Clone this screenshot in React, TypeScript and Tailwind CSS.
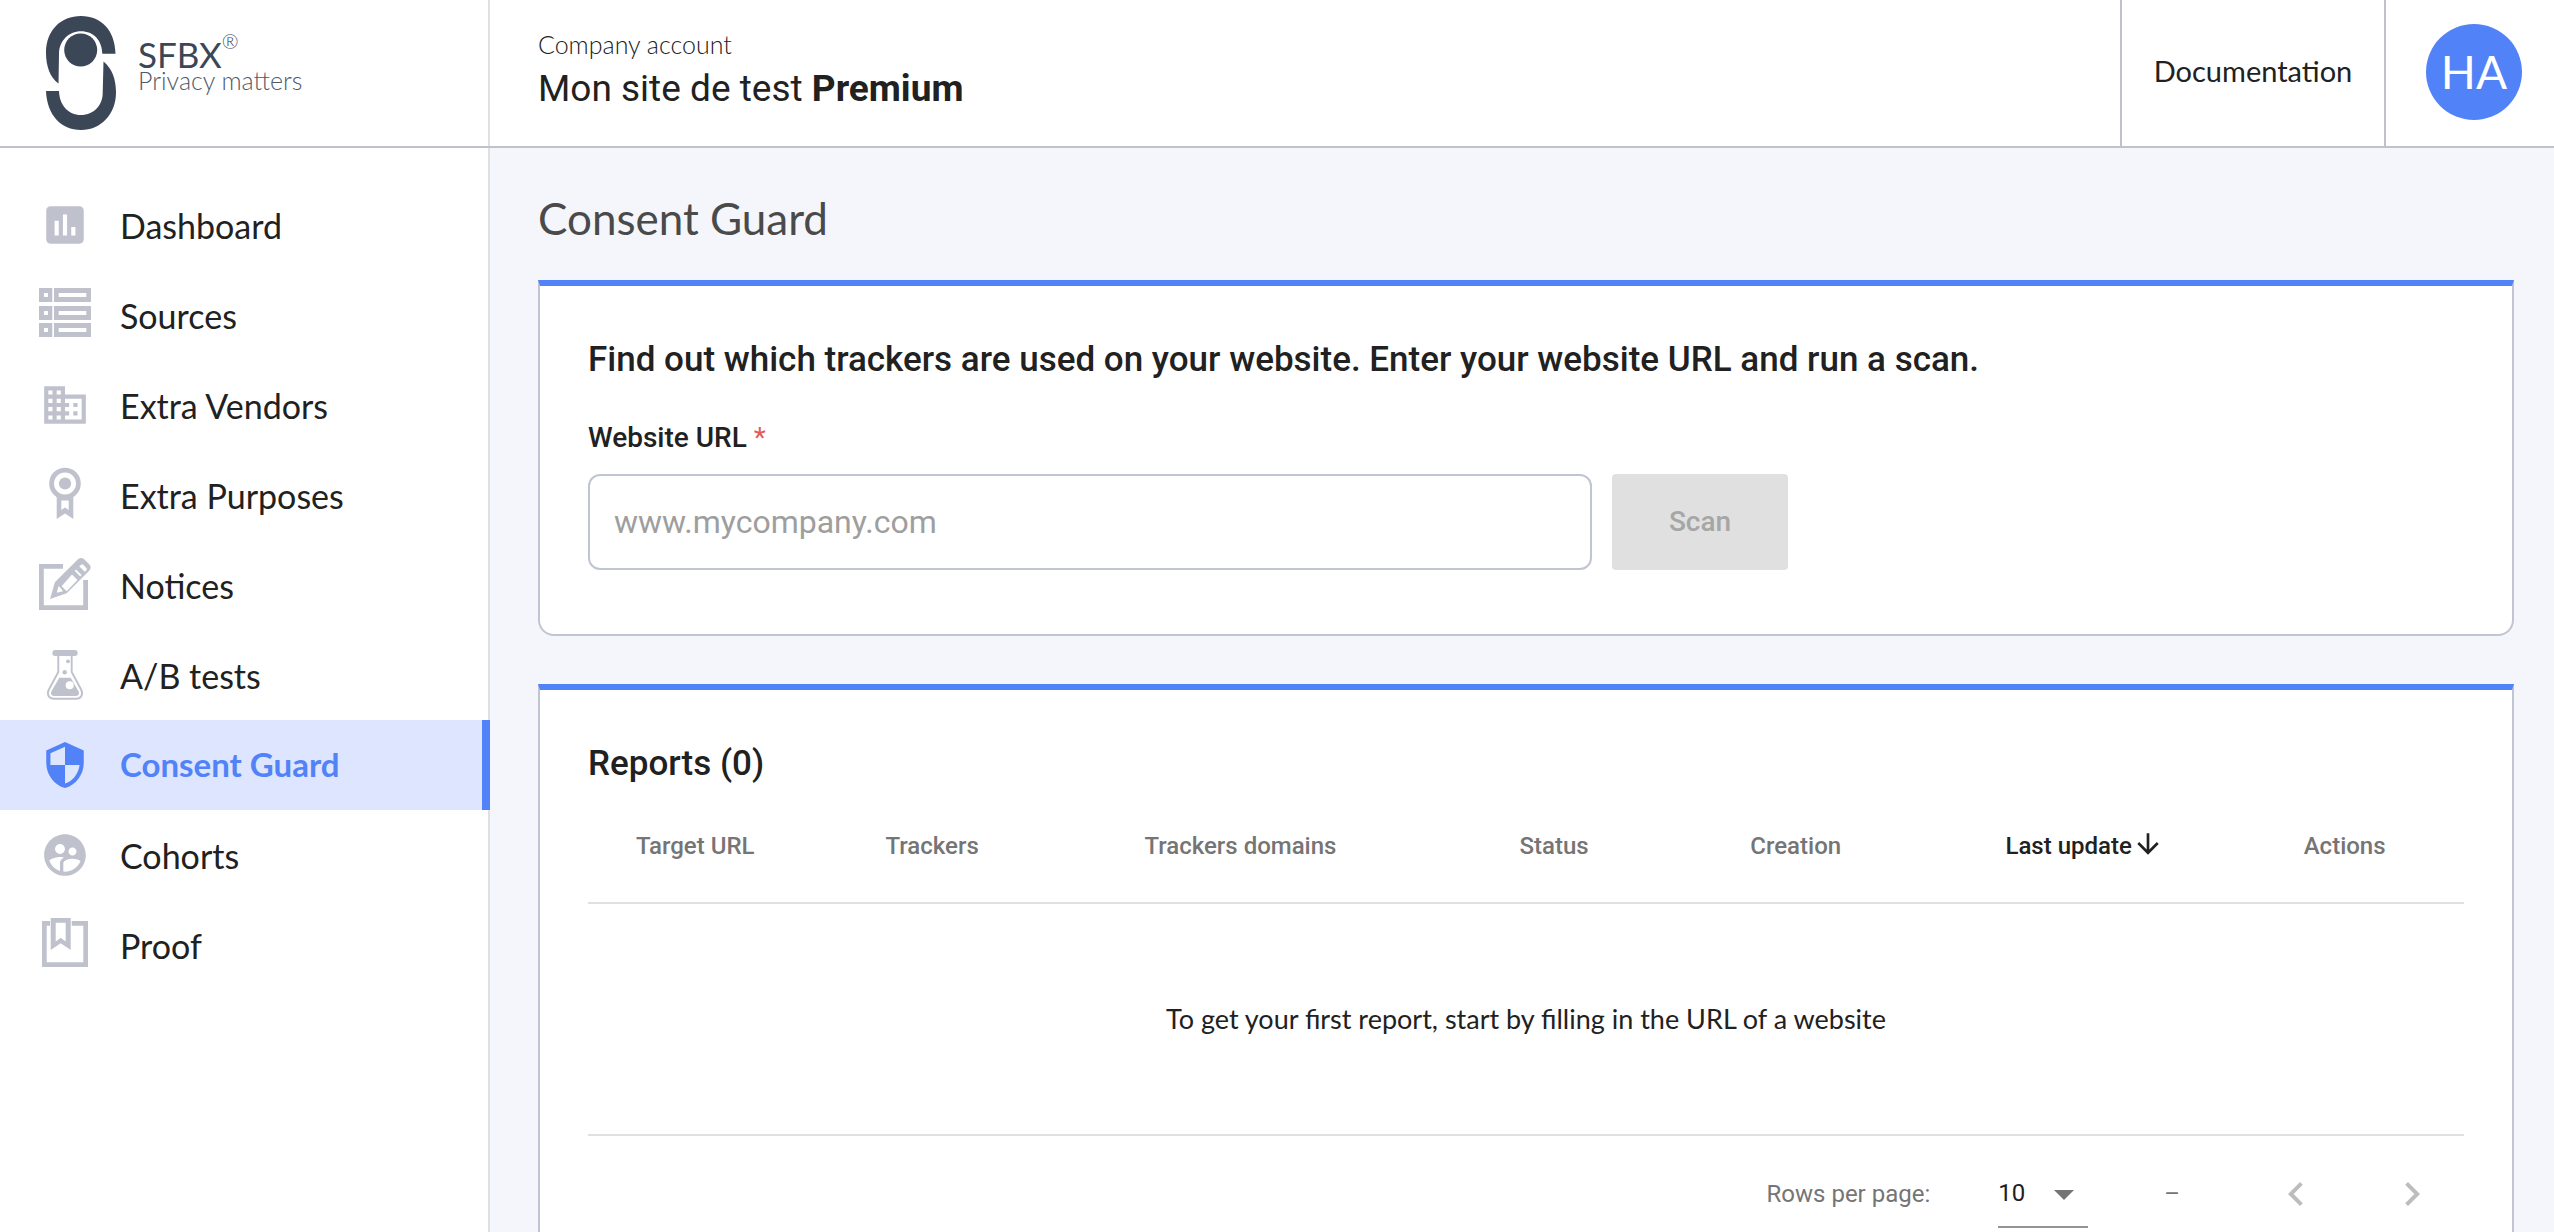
import type { ReactNode } from "react";
import {
  MdArrowDownward,
  MdArrowDropDown,
  MdAssessment,
  MdBusiness,
  MdChevronLeft,
  MdChevronRight,
  MdSecurity,
  MdSupervisedUserCircle,
} from "react-icons/md";

function Drawing({ children }: { children: ReactNode }) {
  return (
    <svg viewBox="0 0 60 60" className="size-[60px]" fill="currentColor" aria-hidden="true">
      {children}
    </svg>
  );
}

const sources = (
  <Drawing>
    {[3, 21, 38].map((y) => (
      <path
        key={y}
        fillRule="evenodd"
        d={`M4 ${y}h13.3v14H4zM9 ${y + 5}v4h4v-4zM19 ${y}h37v14H19zM23.7 ${y + 5}v4h27.6v-4z`}
      />
    ))}
  </Drawing>
);

const purposes = (
  <Drawing>
    <circle cx="30" cy="18.5" r="13.4" fill="none" stroke="currentColor" strokeWidth="4.8" />
    <circle cx="30" cy="18.5" r="6.1" />
    <path fillRule="evenodd" d="M21.7 31h16.6v23L30 48.5 21.7 54zM26.3 35.6V45l3.7-2.6 3.7 2.6v-9.4z" />
  </Drawing>
);

const notices = (
  <Drawing>
    <path d="M4 9h24v4.8H8.8v36.4h39.4V25H53v30H4z" />
    <path
      fillRule="evenodd"
      d="M15 44l5-17L43 4.3q3-2.8 6.2 0l5 5q3 3.2 0 6.5L31.7 38.3zM26.6 31.2l5 5L42.5 25 37 19.6zM23.6 31l-1.8 6.8 6.2-1.6-1.8-2.4zM39.6 15.8l5.6 5.6 1.4-1.4-5.6-5.6zM44.2 11.2l5.6 5.6 1.6-1.6q1-1 0-2.2l-3.2-3.2q-1-1-2 0z"
    />
  </Drawing>
);

const flask = (
  <Drawing>
    <rect x="17.3" y="5" width="25.4" height="6" rx="3" />
    <path
      fill="none"
      stroke="currentColor"
      strokeWidth="1.9"
      d="M23.3 10v17L13.9 44.5C11.3 49.5 14 53.7 19 53.7h22c5 0 7.7-4.2 5.1-9.2L36.7 27V10"
    />
    <path
      fillRule="evenodd"
      d="M24.3 32.7h11.4L43.4 46c1.6 2.8 0 5-3 5H19.6c-3 0-4.6-2.200-3-5zM34.7 36.3a4 4 0 1 0 0 8 4 4 0 0 0 0-8z"
    />
    <circle cx="29.7" cy="27.3" r="2.2" />
    <circle cx="33" cy="16.3" r="1.9" />
  </Drawing>
);

const proof = (
  <Drawing>
    <path d="M7 6h8v4.7h-3.3v36.6h36.6V10.7H36.7V6H53v46H7z" />
    <path fillRule="evenodd" d="M15.7 3h20v32l-10-6.7-10 6.7zM20.7 7.7v18.7l5-3.7 5 3.7V7.7z" />
  </Drawing>
);

const items: { label: string; icon: ReactNode; active?: boolean }[] = [
  { label: "Dashboard", icon: <MdAssessment className="size-[50px]" /> },
  { label: "Sources", icon: sources },
  { label: "Extra Vendors", icon: <MdBusiness className="size-[50px]" /> },
  { label: "Extra Purposes", icon: purposes },
  { label: "Notices", icon: notices },
  { label: "A/B tests", icon: flask },
  { label: "Consent Guard", icon: <MdSecurity className="size-[50px]" />, active: true },
  { label: "Cohorts", icon: <MdSupervisedUserCircle className="size-[50px]" /> },
  { label: "Proof", icon: proof },
];

const columns = [
  { label: "Target URL", width: "w-[13.3%]" },
  { label: "Trackers", width: "w-[13.8%]" },
  { label: "Trackers domains", width: "w-[20%]" },
  { label: "Status", width: "w-[12.3%]" },
  { label: "Creation", width: "w-[13.6%]" },
  { label: "Last update", width: "w-[15.9%]", sorted: true },
  { label: "Actions", width: "w-[11.1%]" },
];

function Logo() {
  return (
    <a href="#" className="flex h-full items-center gap-[22px] pl-[46px] text-[#3b4757]">
      <svg viewBox="0 0 70 114" className="h-[114px] w-[70px]" fill="currentColor" aria-hidden="true">
        <path d="M12.5 67.5C4 61.5 0 50 0 37 0 14 15 0 35 0s34 14 34.5 37.7H56.3C56 24 47.5 15.2 35 15.2S13 25 13 38z" />
        <circle cx="34.7" cy="34" r="16.5" />
        <path d="M57.5 45.5C66 52.5 70 63 70 76.5 70 98 55 114 35 114S1 99 0 75h13c.5 14 9 24 22 24s21.7-10 21.7-22z" />
      </svg>
      <span className="flex flex-col pb-4 font-['Lato']">
        <span className="flex text-[35px] leading-[30px]">
          SFBX<span className="-mt-2 text-[20px] leading-[20px] font-light">®</span>
        </span>
        <span className="text-[25px] leading-[22px] font-light text-[#4f5b6b]">Privacy matters</span>
      </span>
    </a>
  );
}

function Card({ children }: { children: ReactNode }) {
  return (
    <section className="rounded-b-2xl border-2 border-t-6 border-[#c1c5d3] border-t-[#5282f7] bg-white px-12 pt-12">
      {children}
    </section>
  );
}

export default function App() {
  return (
    <div className="flex h-screen flex-col overflow-hidden bg-[#f5f6fb] font-['Roboto',sans-serif] text-[#212121]">
      <header className="flex h-[148px] shrink-0 border-b-2 border-[#bfc2cd] bg-white">
        <div className="w-[490px] shrink-0 border-r-2 border-[#e0e0e0]">
          <Logo />
        </div>
        <div className="flex flex-1 flex-col justify-center pl-12">
          <p className="font-['Lato'] text-[25px] leading-[32px] font-light">Company account</p>
          <p className="text-[37px] leading-[58px]">
            Mon site de test <strong className="font-bold">Premium</strong>
          </p>
        </div>
        <a
          href="#"
          className="flex w-[266px] items-center justify-center border-x-2 border-[#bfc2cd] pb-1 font-['Lato'] text-[29px]"
        >
          Documentation
        </a>
        <div className="flex items-center pr-8 pb-0.5 pl-10">
          <button
            type="button"
            className="flex size-24 items-center justify-center rounded-full bg-[#5282f7] font-['Lato'] text-[46px] leading-none text-white"
          >
            HA
          </button>
        </div>
      </header>

      <div className="flex min-h-0 flex-1">
        <nav className="w-[490px] shrink-0 border-r-2 border-[#e0e0e0] bg-white pt-8">
          <ul>
            {items.map((item) => (
              <li key={item.label}>
                <a
                  href="#"
                  aria-current={item.active ? "page" : undefined}
                  className={
                    item.active
                      ? "-mr-0.5 flex h-[90px] items-center gap-[25px] border-r-8 border-[#5282f7] bg-[#dde5ff] pl-[35px] font-['Lato'] text-[33px] font-bold text-[#5282f7]"
                      : "flex h-[90px] items-center gap-[25px] pl-[35px] font-['Lato'] text-[34px]"
                  }
                >
                  <span
                    className={
                      item.active
                        ? "flex size-[60px] items-center justify-center"
                        : "flex size-[60px] items-center justify-center text-[#bfc2cd]"
                    }
                  >
                    {item.icon}
                  </span>
                  {item.label}
                </a>
              </li>
            ))}
          </ul>
        </nav>

        <main className="flex-1 overflow-y-auto pt-10 pr-10 pl-12 [scrollbar-width:none]">
          <h1 className="mb-8 font-['Lato'] text-[44px] leading-[60px] text-[#4a4a4a]">Consent Guard</h1>

          <div className="flex flex-col gap-12">
            <Card>
              <h2 className="text-[35px] leading-[52px] font-medium">
                Find out which trackers are used on your website. Enter your website URL and run a scan.
              </h2>
              <form className="max-w-[1200px] pt-8 pb-16">
                <label htmlFor="website-url" className="mb-4 block text-[28px] leading-[40px] font-medium">
                  Website URL <span className="font-normal text-[#e25c5c]">*</span>
                </label>
                <div className="flex gap-5">
                  <input
                    id="website-url"
                    type="text"
                    placeholder="www.mycompany.com"
                    className="h-24 min-w-0 flex-1 rounded-xl border-2 border-[#c1c5d3] px-6 text-[32px] placeholder:text-[#9e9e9e]"
                  />
                  <button
                    type="button"
                    disabled
                    className="h-24 w-44 rounded bg-[#e0e0e0] text-[28px] font-medium text-[#a6a6a6]"
                  >
                    Scan
                  </button>
                </div>
              </form>
            </Card>

            <Card>
              <h2 className="text-[35px] leading-[52px] font-medium">Reports (0)</h2>
              <table className="w-full table-fixed border-separate border-spacing-0">
                <thead>
                  <tr>
                    {columns.map((column) => (
                      <th
                        key={column.label}
                        scope="col"
                        className={`${column.width} h-[114px] border-b-2 border-[#e0e0e0] p-0 pl-12 text-left text-[24px] font-medium whitespace-nowrap ${
                          column.sorted ? "text-[#212121]" : "text-[#757575]"
                        }`}
                      >
                        {column.sorted ? (
                          <button type="button" className="flex items-center">
                            {column.label}
                            <MdArrowDownward className="mb-1 size-8" />
                          </button>
                        ) : (
                          column.label
                        )}
                      </th>
                    ))}
                  </tr>
                </thead>
                <tbody>
                  <tr>
                    <td
                      colSpan={7}
                      className="h-[232px] border-b-2 border-[#e0e0e0] p-0 text-center font-['Lato'] text-[27px]"
                    >
                      To get your first report, start by filling in the URL of a website
                    </td>
                  </tr>
                </tbody>
              </table>
              <div className="flex h-[116px] items-center justify-end pr-7 text-[24px] text-[#757575]">
                <label htmlFor="rows-per-page">Rows per page:</label>
                <div className="relative ml-[68px]">
                  <select
                    id="rows-per-page"
                    defaultValue="10"
                    className="h-[68px] w-[90px] appearance-none border-b-2 border-[#949494] text-[#212121]"
                  >
                    <option>10</option>
                    <option>25</option>
                    <option>50</option>
                  </select>
                  <MdArrowDropDown className="pointer-events-none absolute top-2.5 right-0 size-12" />
                </div>
                <span className="ml-[76px]">–</span>
                <button type="button" disabled aria-label="Previous page" className="ml-[92px] text-[#bdbdbd]">
                  <MdChevronLeft className="size-12" />
                </button>
                <button type="button" disabled aria-label="Next page" className="ml-[68px] text-[#bdbdbd]">
                  <MdChevronRight className="size-12" />
                </button>
              </div>
            </Card>
          </div>
        </main>
      </div>
    </div>
  );
}
